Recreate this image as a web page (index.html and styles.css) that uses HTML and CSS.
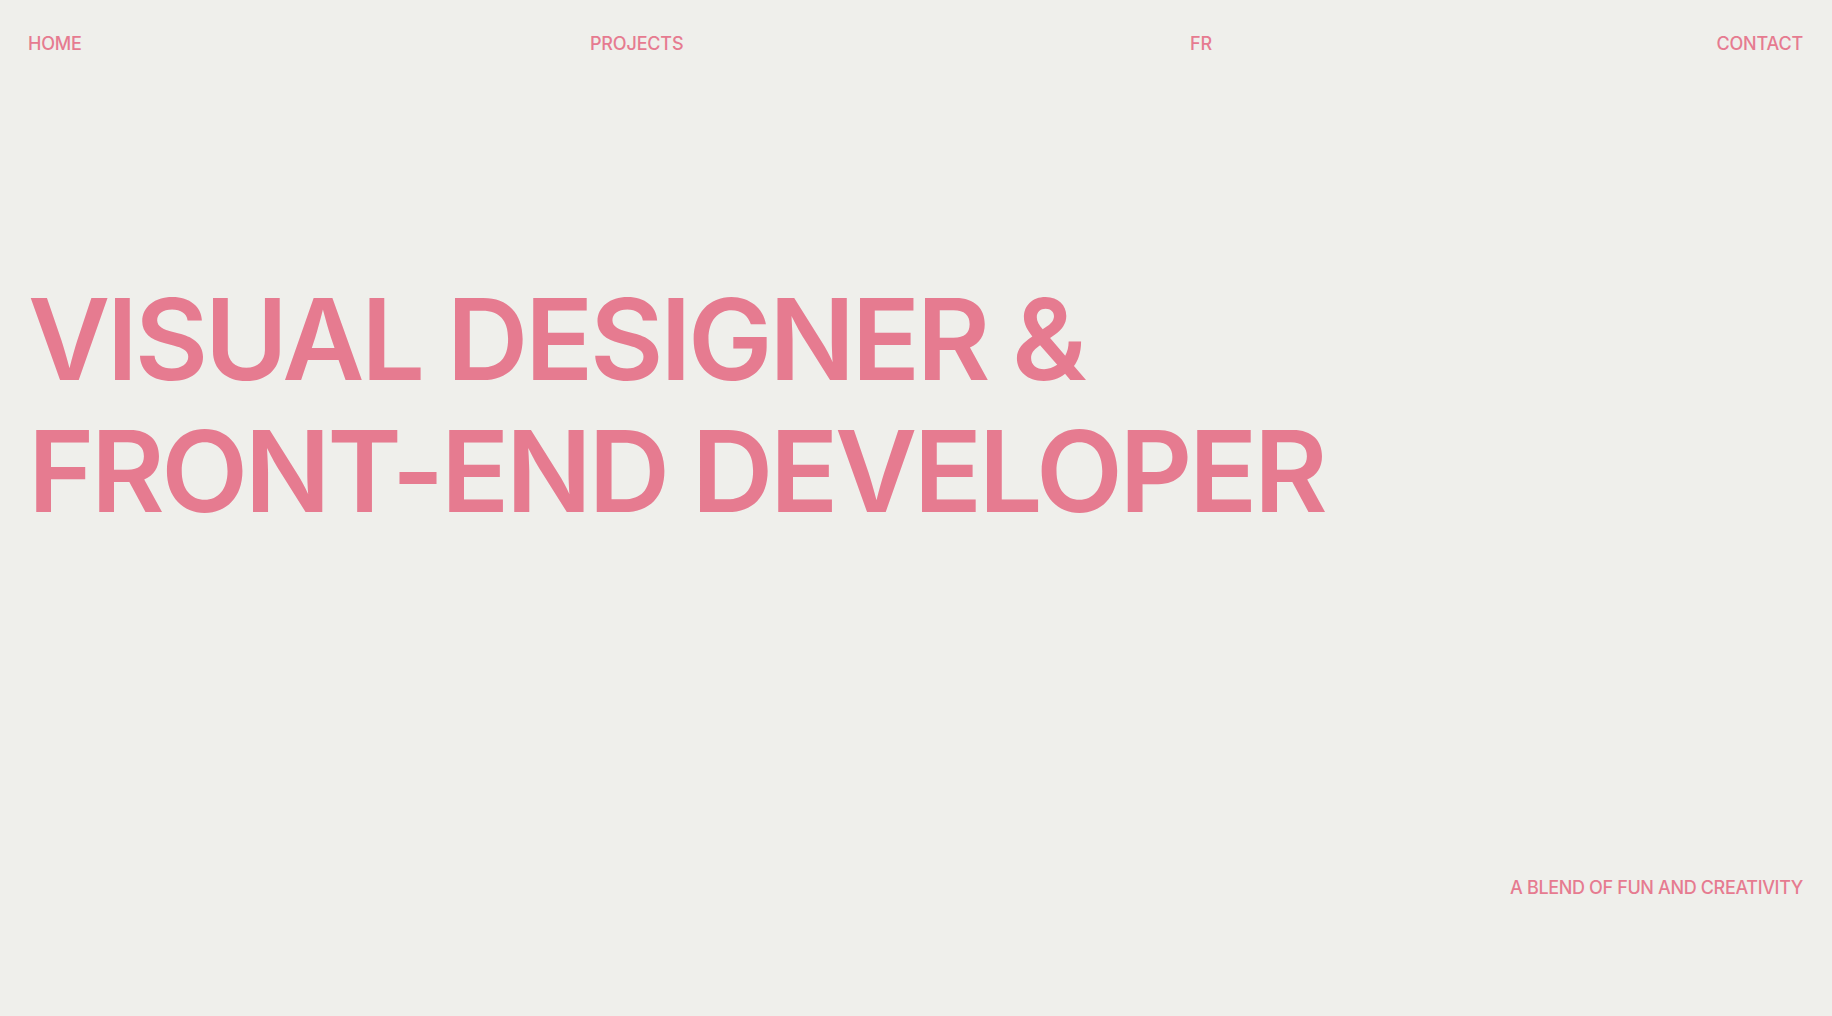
FILE: index.html
```html
<!DOCTYPE html>
<html lang="en">
<head>
<meta charset="utf-8">
<title>Visual Designer & Front-End Developer</title>
<link rel="stylesheet" href="styles.css">
</head>
<body>
<div class="page">
  <header class="nav">
    <a class="nav-link" href="#">HOME</a>
    <a class="nav-link" href="#">PROJECTS</a>
    <a class="nav-link" href="#">FR</a>
    <a class="nav-link nav-right" href="#">CONTACT</a>
  </header>
  <main class="hero">
    <h1 class="title">VISUAL DESIGNER &amp;<br>FRONT-END DEVELOPER</h1>
  </main>
  <footer class="tagline">
    <p class="tagline-text">A BLEND OF FUN AND CREATIVITY</p>
  </footer>
</div>
</body>
</html>
```
FILE: styles.css
```css
html, body {
  margin: 0;
  padding: 0;
  background: #efefeb;
}
.page {
  min-height: 1016px;
  padding: 33px 29px 0 28px;
  box-sizing: border-box;
  font-family: Inter, "Liberation Sans", Arial, sans-serif;
  color: #e67b90;
  display: flex;
  flex-direction: column;
}
.nav {
  display: grid;
  grid-template-columns: 562px 600px 1fr auto;
  font-size: 18px;
  line-height: 22px;
  font-weight: 500;
  letter-spacing: -0.01em;
}
.nav-link {
  color: inherit;
  text-decoration: none;
}
.hero {
  margin-top: 218px;
}
.title {
  margin: 0;
  font-size: 113px;
  line-height: 132px;
  font-weight: 600;
  letter-spacing: -0.03em;
}
.tagline {
  margin-top: 340px;
  display: flex;
  justify-content: flex-end;
}
.tagline-text {
  margin: 0;
  font-size: 18px;
  line-height: 22px;
  font-weight: 500;
  letter-spacing: -0.02em;
}
```
